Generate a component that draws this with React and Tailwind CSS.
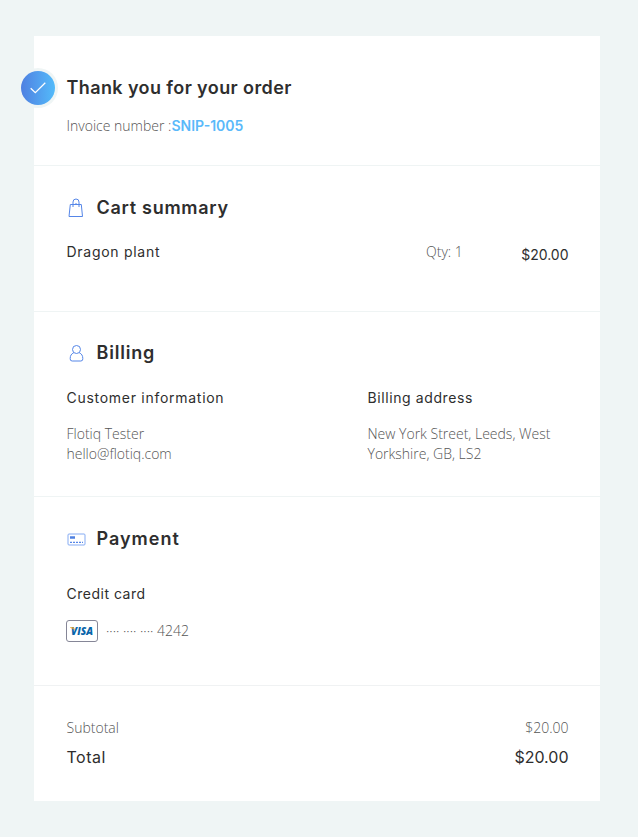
const heading = "font-['Inter',sans-serif] text-[18px] leading-6 font-semibold text-[#2e2e2e] whitespace-nowrap";
const label = "font-['Inter',sans-serif] text-[14px] leading-5 text-[#2e2e2e] whitespace-nowrap";
const body = "font-['Open_Sans',sans-serif] text-[14px] leading-5 font-light text-[#555] whitespace-nowrap";

function BagIcon() {
  return (
    <svg width="18" height="20" viewBox="0 0 18 20" fill="none" stroke="#5586e8" strokeWidth="1">
      <path d="M3.300 6.500h11l1.200 12H2z" />
      <path d="M6 9V4a3 3 0 0 1 6 0v5" />
      <path d="M9 6.500V5" />
    </svg>
  );
}

function UserIcon() {
  return (
    <svg width="20" height="20" viewBox="0 0 20 20" fill="none" stroke="#5586e8" strokeWidth="1">
      <circle cx="9.500" cy="6.500" r="4" />
      <path d="M6.700 9.800C4.300 10.800 3.200 12.700 3.200 15.500v.5q0 2 2 2h8.600q2 0 2-2v-.5c0-2.800-1.100-4.700-3.500-5.700" />
    </svg>
  );
}

function CardIcon() {
  return (
    <svg width="19" height="13" viewBox="0 0 19 13" fill="none" stroke="#85abf3" strokeWidth="1">
      <rect x="1" y="1" width="17" height="11" rx="1" />
      <path d="M3 4.500h5" stroke="#4f80e1" strokeWidth="2.500" />
      <path d="M3 9.300h13" stroke="#5586e8" strokeWidth="1.300" strokeDasharray="2 1" />
    </svg>
  );
}

function Visa() {
  return (
    <div className="flex h-[22px] w-8 items-center justify-center rounded-[3px] border border-[#858697] bg-white">
      <svg width="28" height="18" viewBox="0 0 28 18">
        <text x="3" y="13.300" fontFamily="Open Sans" fontSize="11" fontWeight="800" fontStyle="italic" fill="#0865aa" textLength="22" lengthAdjust="spacingAndGlyphs">VISA</text>
        <path d="M2 5.300h3q1 0 1.200 1l.6 2Q5.500 6.300 2 5.700z" fill="#e9a32b" />
      </svg>
    </div>
  );
}

export default function App() {
  return (
    <div className="h-[837px] w-[638px] bg-[#eff5f5] pt-9 pl-[34px]">
      <main className="h-[765px] w-[566px] bg-white">
        <header className="relative h-[130px] border-b border-[#eff4f4] pt-10 pl-[32.500px]">
          <div className="absolute top-8 -left-4 flex size-10 items-center justify-center rounded-full bg-[#eff5f5]">
            <div className="flex size-[34px] items-center justify-center rounded-full bg-linear-to-r from-[#4f80e1] to-[#53bbfa]">
              <svg width="16" height="12" viewBox="0 0 16 12" fill="none" stroke="white" strokeWidth="1.300">
                <path d="M.7 6.300 5.300 10.700 15.300.8" />
              </svg>
            </div>
          </div>
          <h1 className={`${heading} tracking-[0.4px]`}>Thank you for your order</h1>
          <p className={`${body} mt-4`}>
            Invoice number :<span className="font-['Inter',sans-serif] font-semibold text-[#5ab9fa]">SNIP-1005</span>
          </p>
        </header>
        <section className="h-[146px] border-b border-[#eff4f4] pt-[30px] pr-[31.500px] pl-[32.500px]">
          <div className="flex h-6 items-center">
            <div className="w-[30px]"><BagIcon /></div>
            <h2 className={`${heading} tracking-[0.72px]`}>Cart summary</h2>
          </div>
          <div className="mt-[22px] flex">
            <p className={`${label} w-[359.500px] tracking-[0.72px]`}>Dragon plant</p>
            <p className={body}>Qty: 1</p>
            <p className={`${label} mt-[3px] ml-auto`}>$20.00</p>
          </div>
        </section>
        <section className="h-[185px] border-b border-[#eff4f4] pt-[29px] pl-[32.500px]">
          <div className="flex h-6 items-center">
            <div className="w-[30px]"><UserIcon /></div>
            <h2 className={`${heading} tracking-[0.8px]`}>Billing</h2>
          </div>
          <div className="mt-[23px] flex">
            <div className="w-[301px]">
              <h3 className={`${label} tracking-[0.72px]`}>Customer information</h3>
              <p className={`${body} mt-4`}>Flotiq Tester<br />hello@flotiq.com</p>
            </div>
            <div>
              <h3 className={`${label} tracking-[0.6px]`}>Billing address</h3>
              <p className={`${body} mt-4`}>New York Street, Leeds, West<br />Yorkshire, GB, LS2</p>
            </div>
          </div>
        </section>
        <section className="h-[189px] border-b border-[#f0f2f3] pt-[30px] pl-[32.500px]">
          <div className="flex h-6 items-center">
            <div className="w-[30px]"><CardIcon /></div>
            <h2 className={`${heading} tracking-[1px]`}>Payment</h2>
          </div>
          <h3 className={`${label} mt-[33px] tracking-[0.5px]`}>Credit card</h3>
          <div className="mt-4 -ml-[0.500px] flex items-center">
            <Visa />
            <p className={`${body} ml-2`}>···· ···· ···· 4242</p>
          </div>
        </section>
        <section className="pt-8 pr-[31.500px] pl-[32.500px]">
          <div className="flex justify-between">
            <p className={body}>Subtotal</p>
            <p className={body}>$20.00</p>
          </div>
          <div className="mt-[7px] flex justify-between font-['Inter',sans-serif] text-base leading-6 text-[#2e2e2e]">
            <p className="tracking-[0.5px]">Total</p>
            <p>$20.00</p>
          </div>
        </section>
      </main>
    </div>
  );
}
